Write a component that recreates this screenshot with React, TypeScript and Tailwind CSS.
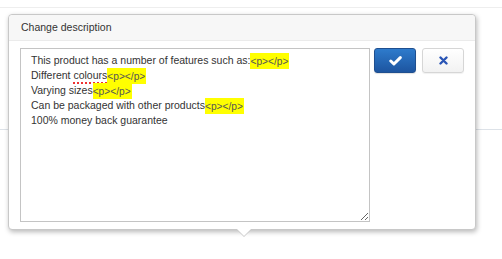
import React from 'react';

const Tag = () => (
   <span className="bg-[#ffff00] text-[#555] text-[10.2px] py-[2.5px] pr-[1px]">&lt;p&gt;&lt;/p&gt;</span>
);

const App = () => {
   return (
      <div className="relative w-[502px] h-[259px] bg-white overflow-hidden font-['Liberation_Sans',Arial,sans-serif]">
         <div className="mt-[7px] h-px bg-[#eeeeee]" />
         <div className="mt-[121px] h-px bg-[#dde2e8]" />

         <div className="absolute left-[8px] top-[14px] w-[468px] bg-white border border-[#c8c8c8] rounded-[4px] shadow-[1px_2px_5px_rgba(0,0,0,0.28)]">
            <div className="h-[26px] bg-[#f7f7f7] border-b border-[#ebebeb] rounded-t-[4px] pl-[12px] flex items-center text-[10.5px] text-[#333]">
               Change description
            </div>

            <div className="flex pt-[7px] pb-[7px] px-[11px]">
               <div className="w-[350px] h-[174px] border border-[#c4c4c4] resize overflow-auto pt-[4px] pl-[10px] text-[10.5px] leading-[15px] text-[#333]">
                  <div>This product has a number of features such as:<Tag /></div>
                  <div>Different <span className="underline decoration-dotted decoration-[#e33] decoration-[1.5px] underline-offset-[3px]">colours</span><Tag /></div>
                  <div>Varying sizes<Tag /></div>
                  <div>Can be packaged with other products<Tag /></div>
                  <div>100% money back guarantee</div>
               </div>

               <button className="ml-[4px] w-[42px] h-[25px] rounded-[3px] border border-[#1f4f8f] bg-gradient-to-b from-[#2e7bcc] to-[#1d55a0] flex items-center justify-center shadow-[0_1px_1px_rgba(0,0,0,0.12)]">
                  <svg width="13" height="10" viewBox="0 0 13 10">
                     <path d="M1.8 5 L4.9 8 L11.3 1.6" fill="none" stroke="#fff" strokeWidth="3" strokeLinecap="round" strokeLinejoin="round" />
                  </svg>
               </button>
               <button className="ml-[6px] w-[42px] h-[25px] rounded-[3px] border border-[#d6d6d6] bg-gradient-to-b from-[#ffffff] to-[#f2f2f2] flex items-center justify-center shadow-[0_1px_1px_rgba(0,0,0,0.06)]">
                  <svg width="9" height="9" viewBox="0 0 9 9">
                     <path d="M1.5 1.5 L7.5 7.5 M7.5 1.5 L1.5 7.5" fill="none" stroke="#2a55b5" strokeWidth="2.4" strokeLinecap="round" />
                  </svg>
               </button>
            </div>

            <div className="absolute left-[227px] -bottom-[8px] w-0 h-0 border-x-[8px] border-t-[8px] border-x-transparent border-t-[#c8c8c8]" />
            <div className="absolute left-[228px] -bottom-[7px] w-0 h-0 border-x-[7px] border-t-[7px] border-x-transparent border-t-white" />
         </div>
      </div>
   );
};

export default App;
